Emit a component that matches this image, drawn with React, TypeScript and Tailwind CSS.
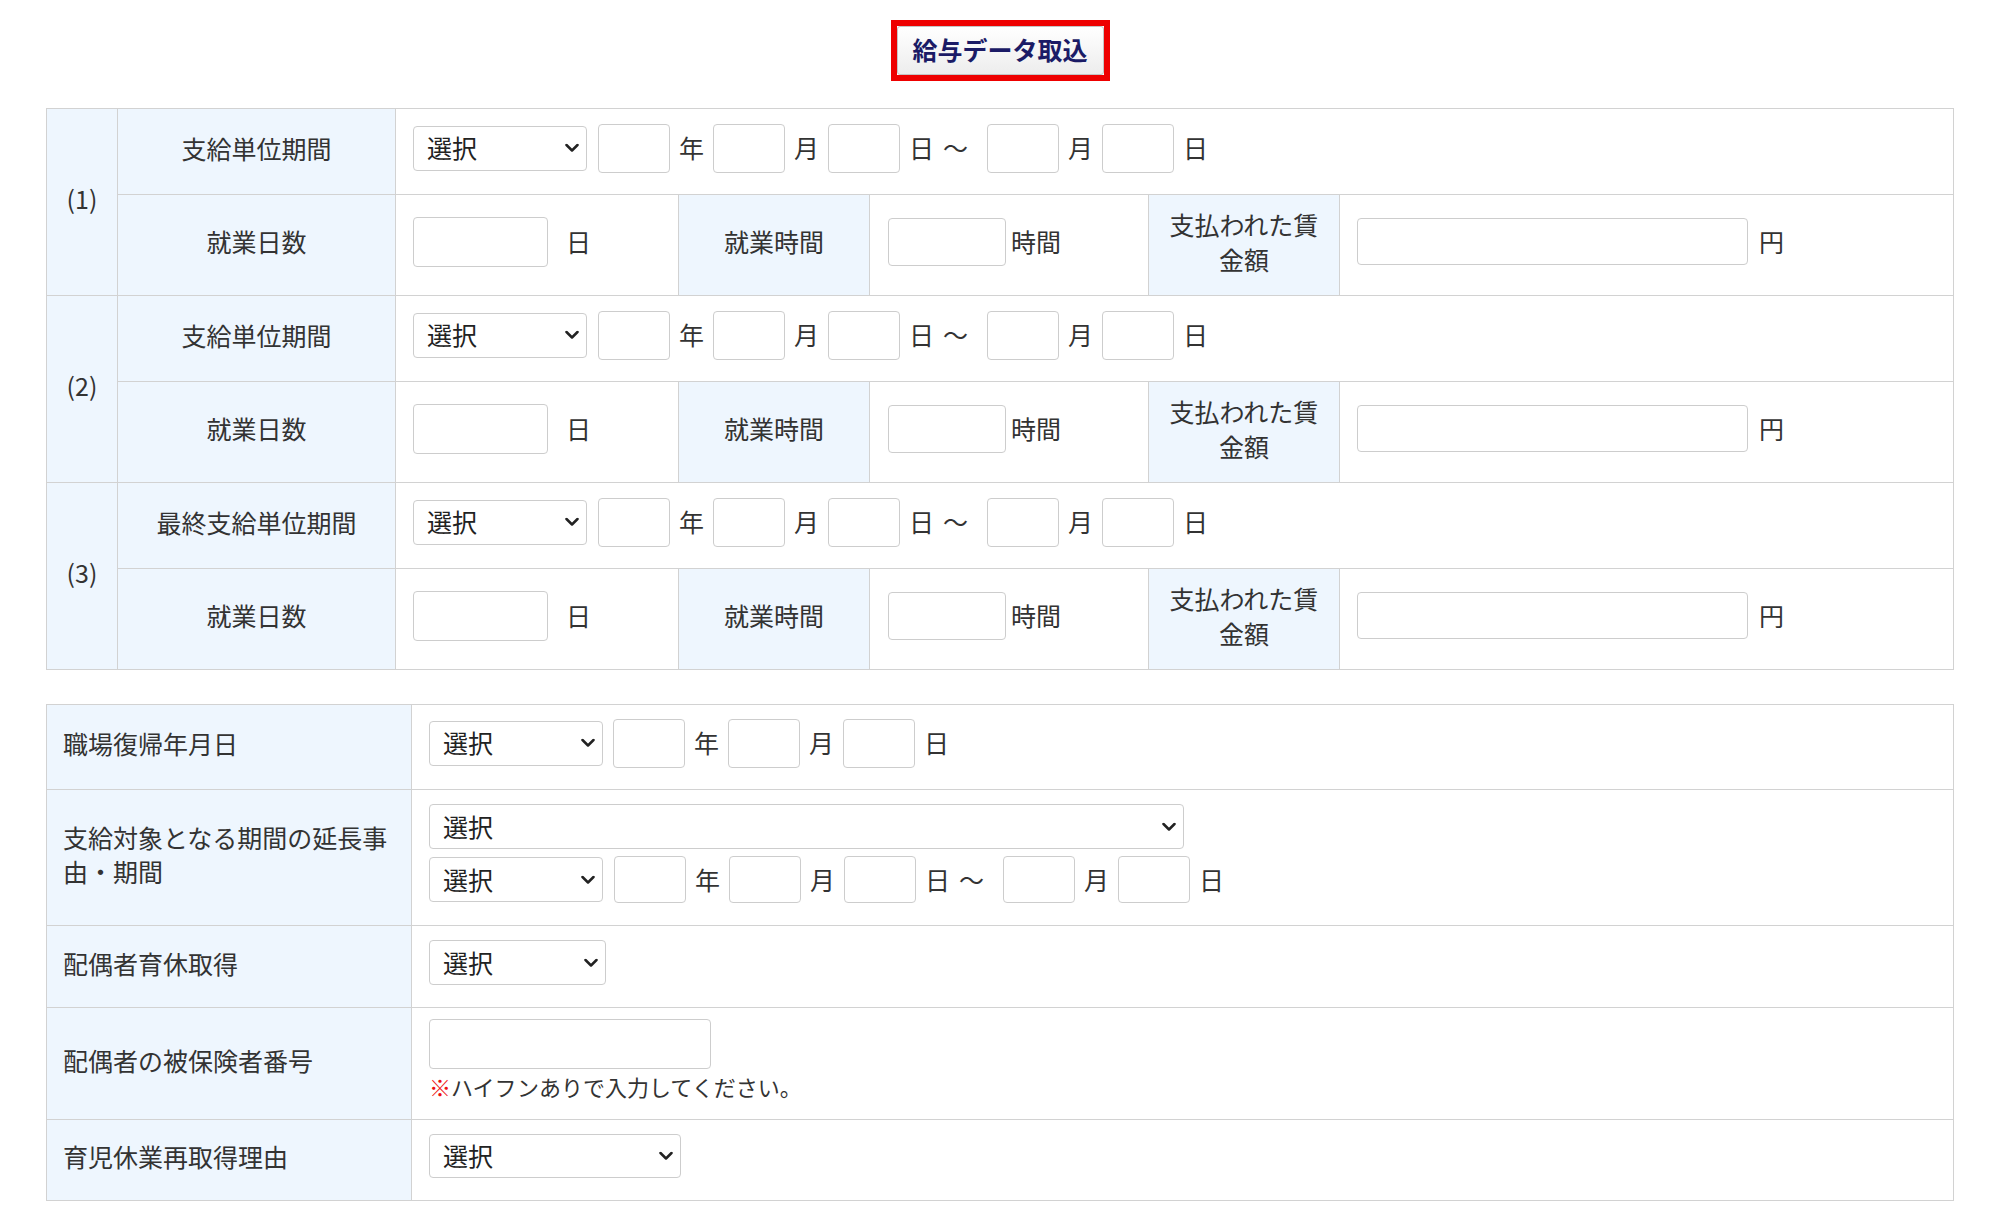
import React from "react";

const FONT = {
  fontFamily: '"Noto Sans CJK JP", "Noto Sans", "Liberation Sans", sans-serif',
};

function Select({ className }: { className: string }) {
  return (
    <div className={`relative shrink-0 ${className}`}>
      <select
        defaultValue="選択"
        className="h-full w-full appearance-none rounded-[4px] border border-[#cdcdcd] bg-white pl-[13px] text-[25px] text-[#222] outline-none"
      >
        <option>選択</option>
      </select>
      <svg
        className="pointer-events-none absolute right-[8px] top-1/2 -translate-y-1/2"
        width="14"
        height="9"
        viewBox="0 0 14 9"
      >
        <path d="M1.5 1.5 L7 7 L12.5 1.5" stroke="#222" strokeWidth="2.5" fill="none" strokeLinecap="round" strokeLinejoin="round" />
      </svg>
    </div>
  );
}

function Box({ className }: { className: string }) {
  return <input type="text" className={`shrink-0 rounded-[4px] border border-[#cdcdcd] bg-white outline-none ${className}`} />;
}

// 選択 年 月 日 ～ 月 日
function PeriodFields({ selectCls, boxCls }: { selectCls: string; boxCls: string }) {
  return (
    <div className="flex items-center gap-[9px]">
      <Select className={selectCls} />
      <Box className={`ml-[2px] ${boxCls}`} />
      <span>年</span>
      <Box className={boxCls} />
      <span>月</span>
      <Box className={boxCls} />
      <span>日</span>
      <span className="mr-[10px]">～</span>
      <Box className={boxCls} />
      <span>月</span>
      <Box className={boxCls} />
      <span>日</span>
    </div>
  );
}

function DateFields({ selectCls, boxCls }: { selectCls: string; boxCls: string }) {
  return (
    <div className="flex items-center gap-[9px]">
      <Select className={selectCls} />
      <Box className={`ml-[1px] ${boxCls}`} />
      <span>年</span>
      <Box className={boxCls} />
      <span>月</span>
      <Box className={boxCls} />
      <span>日</span>
    </div>
  );
}

const cell = "border border-[#d2d2d2] pt-0 pb-[7px]";
const label = `${cell} bg-[#eef6fe] text-center px-[16px] leading-[35px]`;

function WageGroup({ no, periodLabel }: { no: string; periodLabel: string }) {
  return (
    <>
      <tr className="h-[86px]">
        <td rowSpan={2} className={`${cell} bg-[#eef6fe] text-center`}>
          {no}
        </td>
        <td className={label}>{periodLabel}</td>
        <td colSpan={5} className={`${cell} px-[17px]`}>
          <PeriodFields selectCls="h-[45px] w-[174px]" boxCls="h-[49px] w-[72px]" />
        </td>
      </tr>
      <tr className="h-[101px]">
        <td className={label}>就業日数</td>
        <td className={`${cell} px-[17px]`}>
          <div className="flex items-center gap-[18px]">
            <Box className="h-[50px] w-[135px]" />
            <span>日</span>
          </div>
        </td>
        <td className={label}>就業時間</td>
        <td className={`${cell} px-[18px]`}>
          <div className="flex items-center gap-[5px]">
            <Box className="h-[48px] w-[118px]" />
            <span>時間</span>
          </div>
        </td>
        <td className={label}>支払われた賃金額</td>
        <td className={`${cell} px-[17px]`}>
          <div className="flex items-center gap-[11px]">
            <Box className="h-[47px] w-[391px]" />
            <span>円</span>
          </div>
        </td>
      </tr>
    </>
  );
}

const cell2 = "border border-[#d2d2d2] pt-0 pb-[8px]";
const label2 = `${cell2} bg-[#eef6fe] px-[16px] text-left leading-[34px]`;
const value2 = `${cell2} px-[17px]`;

export default function App() {
  return (
    <div className="min-h-screen bg-white px-[46px] pt-[20px] text-[25px] text-[#333]" style={FONT}>
      <div className="flex justify-center">
        <div className="border-[6px] border-[#ee0000]">
          <button className="flex h-[49px] w-[207px] items-center justify-center rounded-[3px] border border-[#c4c4c4] bg-gradient-to-b from-white to-[#ededed] pb-[2px] text-[25px] font-bold text-[#1b1b66]">
            給与データ取込
          </button>
        </div>
      </div>

      <table className="mt-[27px] w-full table-fixed border-collapse">
        <colgroup>
          <col className="w-[71px]" />
          <col className="w-[278px]" />
          <col className="w-[283px]" />
          <col className="w-[191px]" />
          <col className="w-[279px]" />
          <col className="w-[191px]" />
          <col />
        </colgroup>
        <tbody>
          <WageGroup no="(1)" periodLabel="支給単位期間" />
          <WageGroup no="(2)" periodLabel="支給単位期間" />
          <WageGroup no="(3)" periodLabel="最終支給単位期間" />
        </tbody>
      </table>

      <table className="mt-[34px] w-full table-fixed border-collapse">
        <colgroup>
          <col className="w-[365px]" />
          <col />
        </colgroup>
        <tbody>
          <tr className="h-[85px]">
            <td className={label2}>職場復帰年月日</td>
            <td className={value2}>
              <DateFields selectCls="h-[45px] w-[174px]" boxCls="h-[49px] w-[72px]" />
            </td>
          </tr>
          <tr className="h-[136px]">
            <td className={label2}>支給対象となる期間の延長事由・期間</td>
            <td className={value2}>
              <div className="flex flex-col gap-[7px]">
                <Select className="h-[45px] w-[755px]" />
                <PeriodFields selectCls="h-[45px] w-[174px]" boxCls="h-[47px] w-[72px]" />
              </div>
            </td>
          </tr>
          <tr className="h-[82px]">
            <td className={label2}>配偶者育休取得</td>
            <td className={value2}>
              <Select className="h-[45px] w-[177px]" />
            </td>
          </tr>
          <tr className="h-[112px]">
            <td className={label2}>配偶者の被保険者番号</td>
            <td className={value2}>
              <Box className="h-[50px] w-[282px]" />
              <div className="mt-[2px] text-[22px] leading-[30px]">
                <span className="font-bold text-[#ee1111]">※</span>ハイフンありで入力してください。
              </div>
            </td>
          </tr>
          <tr className="h-[81px]">
            <td className={label2}>育児休業再取得理由</td>
            <td className={value2}>
              <Select className="h-[44px] w-[252px]" />
            </td>
          </tr>
        </tbody>
      </table>
    </div>
  );
}
